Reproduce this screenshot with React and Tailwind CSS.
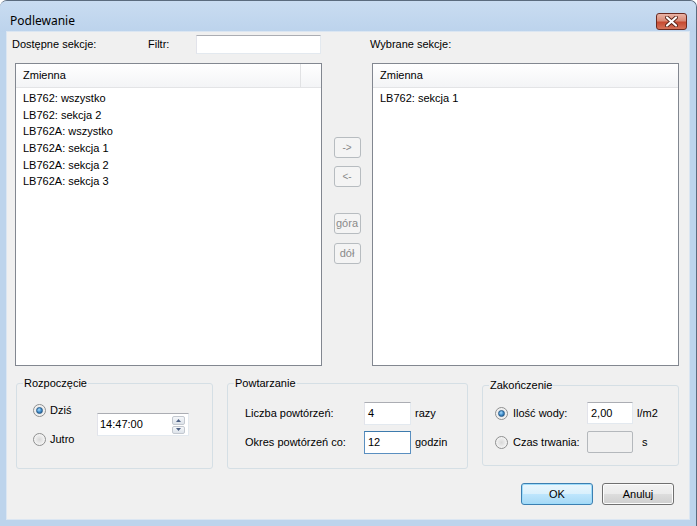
import React from 'react'

const left = ['LB762: wszystko', 'LB762: sekcja 2', 'LB762A: wszystko', 'LB762A: sekcja 1', 'LB762A: sekcja 2', 'LB762A: sekcja 3']
const right = ['LB762: sekcja 1']

const ListBox = ({ items, divider }) => (
  <div className="flex h-[303px] w-[307px] flex-col border border-[#828790] bg-white">
    <div className="flex h-[24px] border-b border-[#e3e4e6] bg-[linear-gradient(to_bottom,#ffffff,#f3f4f6)]">
      <div className={`flex w-[285px] items-center pl-[7px] ${divider ? 'border-r border-[#e1e2e4]' : ''}`}>Zmienna</div>
    </div>
    <div className="flex flex-col pl-[7px] pt-[2px]">
      {items.map(t => (
        <div key={t} className="h-[16.7px] leading-[16.7px]">{t}</div>
      ))}
    </div>
  </div>
)

const SmallBtn = ({ children, className = '' }) => (
  <div className={`flex h-[21px] w-[27px] items-center justify-center rounded-[3px] border border-[#b7bcc0] bg-[#f4f4f4] text-[10px] text-[#8a8a8a] ${className}`}>
    {children}
  </div>
)

const Radio = ({ checked }) => (
  <span className="flex h-[13px] w-[13px] shrink-0 items-center justify-center rounded-full border border-[#8e8f8f] bg-[radial-gradient(circle_at_50%_50%,#d8d8d8,#f4f4f4_70%)]">
    {checked && (
      <span className="h-[7px] w-[7px] rounded-full border border-[#2a5d8a] bg-[radial-gradient(circle_at_40%_35%,#a6dcff,#3b87c6_55%,#1b4f7e)]" />
    )}
  </span>
)

const TextBox = ({ value, className = '', focused, disabled }) => (
  <div
    className={`flex items-center pl-[3px] ${
      focused
        ? 'border border-[#5a8fc0] border-t-[#3d7bad] bg-white'
        : disabled
        ? 'rounded-[2px] border border-[#b4b8bc] bg-[#f0f0f0]'
        : 'border border-[#e3e9ef] border-t-[#abadb3] border-l-[#e2e3ea] bg-white'
    } ${className}`}
  >
    {value}
  </div>
)

const Group = ({ title, className = '', children }) => (
  <fieldset className={`rounded-[3px] border border-[#d5dfe5] ${className}`}>
    <legend className="ml-[6px] px-[1px] leading-[13px]">{title}</legend>
    {children}
  </fieldset>
)

export default function App() {
  return (
    <div className="flex h-[526px] w-[697px] flex-col overflow-hidden rounded-t-[7px] border-t border-r border-[#5b6b7e] bg-[#bdd4ec] font-['Liberation_Sans',Arial,sans-serif] text-[11px] text-black">
      {/* title bar */}
      <div className="flex h-[31px] shrink-0 items-start justify-between bg-[linear-gradient(to_bottom,#c9dcf1,#bcd3ec)] pl-[10px] pr-[9px] pt-[11px]">
        <span className="font-['Noto_Sans',sans-serif] text-[12px] leading-[18px] text-black">Podlewanie</span>
        <div className="mt-[1px] flex h-[17px] w-[31px] items-center justify-center rounded-[3px] border border-[#6b2a20] bg-[linear-gradient(to_bottom,#eab3a6_0%,#d98a76_45%,#c64a31_55%,#d5735a_100%)]">
          <svg width="13" height="11" viewBox="0 0 13 11">
            <path d="M2 1.5 L11 9.5 M11 1.5 L2 9.5" stroke="#5a2418" strokeWidth="4" strokeLinecap="round" />
            <path d="M2 1.5 L11 9.5 M11 1.5 L2 9.5" stroke="#ffffff" strokeWidth="2.2" strokeLinecap="round" />
          </svg>
        </div>
      </div>

      {/* client area */}
      <div className="ml-[7px] flex h-[487px] w-[682px] shrink-0 flex-col bg-[#f0f0f0] pt-[3px] shadow-[0_0_0_1px_#dbe6f2]">
        <div className="flex h-[19px] items-center">
          <span className="ml-[5px] w-[136px]">Dostępne sekcje:</span>
          <span className="w-[48px]">Filtr:</span>
          <TextBox value="" className="h-[19px] w-[125px]" />
          <span className="ml-[49px]">Wybrane sekcje:</span>
        </div>

        <div className="ml-[8px] mt-[9px] flex">
          <ListBox items={left} divider />
          <div className="flex w-[50px] flex-col items-center">
            <SmallBtn className="mt-[74px]">-&gt;</SmallBtn>
            <SmallBtn className="mt-[8px]">&lt;-</SmallBtn>
            <SmallBtn className="mt-[26px] text-[11px]">góra</SmallBtn>
            <SmallBtn className="mt-[9px] text-[11px]">dół</SmallBtn>
          </div>
          <ListBox items={right} />
        </div>

        <div className="ml-[9px] mt-[11px] flex items-start gap-[14px]">
          <Group title="Rozpoczęcie" className="h-[92px] w-[197px]">
            <div className="flex pl-[16px]">
              <div className="flex w-[64px] flex-col gap-[12px] pt-[12px]">
                <div className="flex h-[17px] items-center gap-[4px]">
                  <Radio checked />
                  <span>Dziś</span>
                </div>
                <div className="flex h-[17px] items-center gap-[4px]">
                  <Radio />
                  <span>Jutro</span>
                </div>
              </div>
              <div className="mt-[23px] flex h-[23px] w-[92px] items-center justify-between border border-[#e3e9ef] border-t-[#abadb3] border-l-[#e2e3ea] bg-white pl-[2px] pr-[3px]">
                <span>14:47:00</span>
                <div className="flex flex-col gap-[1px]">
                  <div className="flex h-[9px] w-[13px] items-center justify-center rounded-[2px] border border-[#c3c8cf] bg-[linear-gradient(to_bottom,#f5f7fa,#dde3ea)]">
                    <svg width="5" height="3" viewBox="0 0 5 3"><path d="M0 3 L2.5 0 L5 3 Z" fill="#4d6185" /></svg>
                  </div>
                  <div className="flex h-[8px] w-[13px] items-center justify-center rounded-[2px] border border-[#c3c8cf] bg-[linear-gradient(to_bottom,#f5f7fa,#dde3ea)]">
                    <svg width="5" height="3" viewBox="0 0 5 3"><path d="M0 0 L2.5 3 L5 0 Z" fill="#4d6185" /></svg>
                  </div>
                </div>
              </div>
            </div>
          </Group>

          <Group title="Powtarzanie" className="h-[92px] w-[241px]">
            <div className="flex flex-col gap-[6px] pl-[17px] pt-[12px]">
              <div className="flex h-[23px] items-center">
                <span className="w-[119px]">Liczba powtórzeń:</span>
                <TextBox value="4" className="h-[23px] w-[47px]" />
                <span className="ml-[4px]">razy</span>
              </div>
              <div className="flex h-[23px] items-center">
                <span className="w-[119px]">Okres powtórzeń co:</span>
                <TextBox value="12" focused className="h-[23px] w-[47px]" />
                <span className="ml-[4px]">godzin</span>
              </div>
            </div>
          </Group>

          <Group title="Zakończenie" className="mt-[2px] h-[87px] w-[197px]">
            <div className="flex flex-col gap-[7px] pl-[12px] pt-[10px]">
              <div className="flex h-[22px] items-center">
                <div className="flex w-[92px] items-center gap-[5px]">
                  <Radio checked />
                  <span>Ilość wody:</span>
                </div>
                <TextBox value="2,00" className="h-[22px] w-[46px]" />
                <span className="ml-[4px]">l/m2</span>
              </div>
              <div className="flex h-[22px] items-center">
                <div className="flex w-[92px] items-center gap-[5px]">
                  <Radio />
                  <span>Czas trwania:</span>
                </div>
                <TextBox value="" disabled className="h-[22px] w-[46px]" />
                <span className="ml-[9px]">s</span>
              </div>
            </div>
          </Group>
        </div>

        <div className="mt-[14px] flex justify-end gap-[9px] pr-[15px]">
          <div className="flex h-[22px] w-[72px] items-center justify-center rounded-[3px] border border-[#3c7fb1] bg-[linear-gradient(to_bottom,#eaf6fd_0%,#d9f0fc_50%,#bee6fd_50%,#a7d9f5_100%)] shadow-[inset_0_0_0_1px_#9fdcfa]">
            OK
          </div>
          <div className="flex h-[22px] w-[72px] items-center justify-center rounded-[3px] border border-[#707070] bg-[linear-gradient(to_bottom,#f2f2f2_0%,#ebebeb_50%,#dddddd_50%,#cfcfcf_100%)] shadow-[inset_0_0_0_1px_#fcfcfc]">
            Anuluj
          </div>
        </div>
      </div>
    </div>
  )
}
